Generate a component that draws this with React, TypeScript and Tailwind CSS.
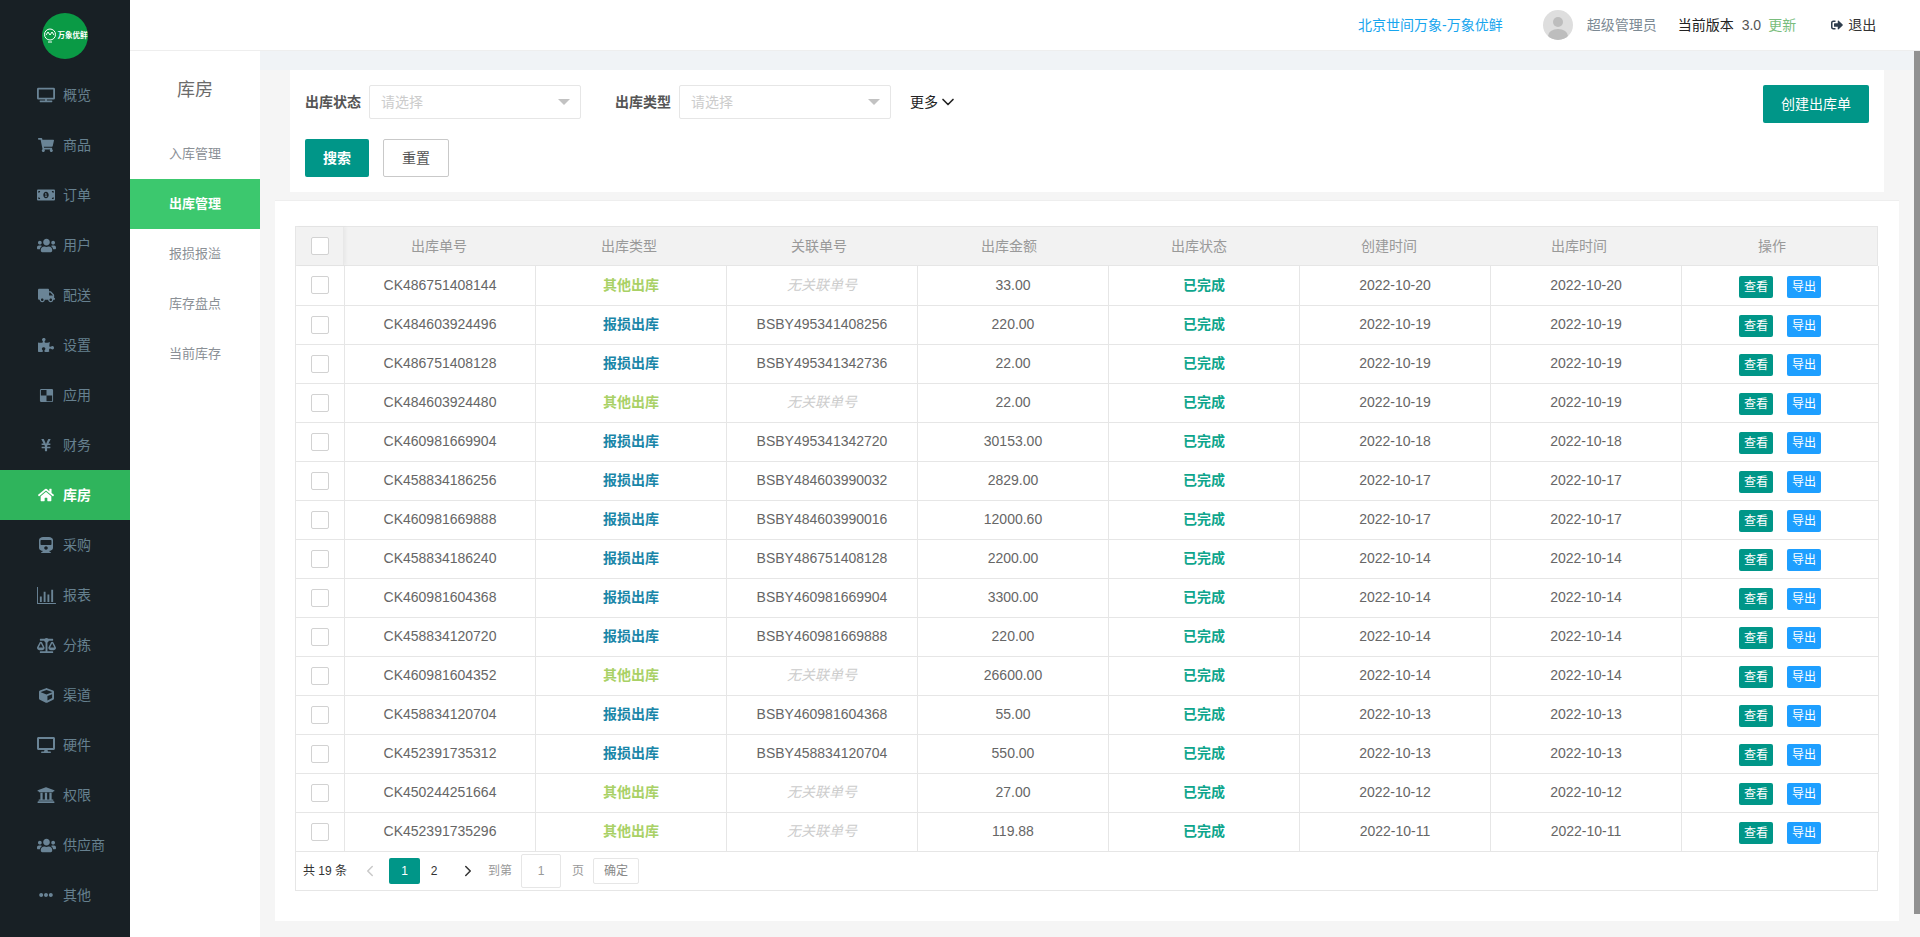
import {
  FaBalanceScale,
  FaCube,
  FaDelicious,
  FaDesktop,
  FaEllipsisH,
  FaHome,
  FaMoneyBillAlt,
  FaPuzzlePiece,
  FaShoppingCart,
  FaSignOutAlt,
  FaTrain,
  FaTruck,
  FaTv,
  FaUniversity,
  FaUsers,
  FaYenSign,
} from "react-icons/fa";
import { LuChevronDown, LuChevronLeft, LuChevronRight } from "react-icons/lu";

const BarsIcon = () => (
  <svg viewBox="0 0 20 18" className="w-[19px] h-[17px]" fill="currentColor">
    <path d="M0 0h1v17h19v1H0z" />
    <path d="M3 10h2v6H3zM7 5h2v11H7zM11 8h2v8h-2zM15 3h2v13h-2z" />
  </svg>
);

const menus = [
  { name: "概览", icon: <FaTv size={18} /> },
  { name: "商品", icon: <FaShoppingCart size={16} /> },
  { name: "订单", icon: <FaMoneyBillAlt size={18} /> },
  { name: "用户", icon: <FaUsers size={19} /> },
  { name: "配送", icon: <FaTruck size={17} /> },
  { name: "设置", icon: <FaPuzzlePiece size={16} /> },
  { name: "应用", icon: <FaDelicious size={15} /> },
  { name: "财务", icon: <FaYenSign size={14} /> },
  { name: "库房", icon: <FaHome size={16} />, active: true },
  { name: "采购", icon: <FaTrain size={16} /> },
  { name: "报表", icon: <BarsIcon /> },
  { name: "分拣", icon: <FaBalanceScale size={19} /> },
  { name: "渠道", icon: <FaCube size={15} /> },
  { name: "硬件", icon: <FaDesktop size={18} /> },
  { name: "权限", icon: <FaUniversity size={18} /> },
  { name: "供应商", icon: <FaUsers size={19} /> },
  { name: "其他", icon: <FaEllipsisH size={14} /> },
];

const subMenus = ["入库管理", "出库管理", "报损报溢", "库存盘点", "当前库存"];

const headers = ["出库单号", "出库类型", "关联单号", "出库金额", "出库状态", "创建时间", "出库时间"];

const rows = [
  ["CK486751408144", "其他出库", "", "33.00", "2022-10-20", "2022-10-20"],
  ["CK484603924496", "报损出库", "BSBY495341408256", "220.00", "2022-10-19", "2022-10-19"],
  ["CK486751408128", "报损出库", "BSBY495341342736", "22.00", "2022-10-19", "2022-10-19"],
  ["CK484603924480", "其他出库", "", "22.00", "2022-10-19", "2022-10-19"],
  ["CK460981669904", "报损出库", "BSBY495341342720", "30153.00", "2022-10-18", "2022-10-18"],
  ["CK458834186256", "报损出库", "BSBY484603990032", "2829.00", "2022-10-17", "2022-10-17"],
  ["CK460981669888", "报损出库", "BSBY484603990016", "12000.60", "2022-10-17", "2022-10-17"],
  ["CK458834186240", "报损出库", "BSBY486751408128", "2200.00", "2022-10-14", "2022-10-14"],
  ["CK460981604368", "报损出库", "BSBY460981669904", "3300.00", "2022-10-14", "2022-10-14"],
  ["CK458834120720", "报损出库", "BSBY460981669888", "220.00", "2022-10-14", "2022-10-14"],
  ["CK460981604352", "其他出库", "", "26600.00", "2022-10-14", "2022-10-14"],
  ["CK458834120704", "报损出库", "BSBY460981604368", "55.00", "2022-10-13", "2022-10-13"],
  ["CK452391735312", "报损出库", "BSBY458834120704", "550.00", "2022-10-13", "2022-10-13"],
  ["CK450244251664", "其他出库", "", "27.00", "2022-10-12", "2022-10-12"],
  ["CK452391735296", "其他出库", "", "119.88", "2022-10-11", "2022-10-11"],
];

const Checkbox = () => (
  <span className="block w-[18px] h-[18px] mx-auto bg-white border border-[#d2d2d2] rounded-[2px]" />
);

const Select = () => (
  <div className="flex items-center justify-between w-[212px] h-[34px] pl-[11px] pr-[10px] bg-white border border-[#e6e6e6] rounded-[2px] text-[14px] text-[#cccccc]">
    <span>请选择</span>
    <span className="w-0 h-0 border-x-[6px] border-x-transparent border-t-[6px] border-t-[#c2c2c2]" />
  </div>
);

const App = () => {
  return (
    <div className="flex w-[1920px] h-[937px] overflow-hidden bg-[#f5f5f5] font-['Liberation_Sans','Noto_Sans_CJK_SC',sans-serif]">
      {/* Main menu */}
      <aside className="w-[130px] shrink-0 bg-[#182025]">
        <div className="flex items-start justify-center h-[70px] pt-[13px]">
          <div className="flex items-center justify-center gap-[1px] w-[46px] h-[46px] rounded-full bg-[#0a9a45] text-white">
            <svg viewBox="0 0 14 16" className="w-[14px] h-[16px] shrink-0" fill="none" stroke="currentColor" strokeWidth="1">
              <circle cx="7" cy="6.5" r="5.5" />
              <path d="M3 7l2-3 2 3 2-3 2 3M5 14h4" />
            </svg>
            <span className="text-[7.5px] leading-none font-bold whitespace-nowrap">万象优鲜</span>
          </div>
        </div>
        {menus.map((m) => (
          <div
            key={m.name}
            className={
              m.active
                ? "flex items-center h-[50px] bg-[#2fb45c] text-white"
                : "flex items-center h-[50px] text-[#6a8496]"
            }
          >
            <span className="flex justify-center w-[20px] ml-[36px] mr-[7px]">{m.icon}</span>
            <span className={m.active ? "text-[14px] font-bold" : "text-[14px] text-[#66808f]"}>{m.name}</span>
          </div>
        ))}
      </aside>

      <div className="flex flex-col flex-1 min-w-0">
        {/* Top bar */}
        <header className="flex items-center h-[50px] shrink-0 bg-white text-[14px]">
          <span className="ml-[1228px] text-[#17a5ee] whitespace-nowrap">北京世间万象-万象优鲜</span>
          <span className="ml-[40px] w-[30px] h-[30px] rounded-full overflow-hidden bg-[#dedede]">
            <svg viewBox="0 0 30 30" className="w-[30px] h-[30px]" fill="#bdbdbd">
              <circle cx="15" cy="12" r="5" />
              <ellipse cx="15" cy="26" rx="10" ry="7" />
            </svg>
          </span>
          <span className="ml-[14px] text-[#7c8a94] whitespace-nowrap">超级管理员</span>
          <span className="ml-[21px] text-[#222222] whitespace-nowrap">当前版本</span>
          <span className="ml-[8px] text-[#555555]">3.0</span>
          <span className="ml-[7px] text-[#79bd7c] whitespace-nowrap">更新</span>
          <FaSignOutAlt size={12} className="ml-[35px] shrink-0 text-[#2f3e4e]" />
          <span className="ml-[5px] text-[#333333] whitespace-nowrap">退出</span>
        </header>

        <div className="flex flex-1 min-h-0 border-t border-[#eeeeee]">
          {/* Sub menu */}
          <nav className="w-[130px] shrink-0 bg-white">
            <div className="flex items-center justify-center h-[78px] text-[18px] text-[#6b6b6b]">库房</div>
            {subMenus.map((s) => (
              <div
                key={s}
                className={
                  s === "出库管理"
                    ? "flex items-center justify-center h-[50px] text-[13px] font-bold text-white bg-[#3cc86e]"
                    : "flex items-center justify-center h-[50px] text-[13px] text-[#8b9096]"
                }
              >
                {s}
              </div>
            ))}
          </nav>

          <main className="flex-1 min-w-0">
            <div className="h-[19px] bg-[#f0f3f6]" />

            {/* Filters */}
            <section className="flex justify-between w-[1594px] h-[122px] ml-[30px] p-[15px] bg-white">
              <div>
                <div className="flex items-center">
                  <span className="w-[64px] text-[14px] font-bold text-[#555555] whitespace-nowrap">出库状态</span>
                  <Select />
                  <span className="w-[98px] pl-[34px] text-[14px] font-bold text-[#555555] whitespace-nowrap">出库类型</span>
                  <Select />
                  <span className="ml-[19px] text-[14px] text-[#222222]">更多</span>
                  <LuChevronDown size={20} className="text-[#222222]" />
                </div>
                <div className="flex gap-[14px] mt-[20px]">
                  <button type="button" className="w-[64px] h-[38px] rounded-[2px] bg-[#009688] text-[14px] font-bold text-white">
                    搜索
                  </button>
                  <button type="button" className="w-[66px] h-[38px] rounded-[2px] bg-white border border-[#c9c9c9] text-[14px] text-[#555555]">
                    重置
                  </button>
                </div>
              </div>
              <button type="button" className="w-[106px] h-[38px] rounded-[2px] bg-[#009688] text-[14px] text-white">
                创建出库单
              </button>
            </section>

            {/* Table card */}
            <section className="w-[1624px] h-[721px] ml-[15px] mt-[8px] pt-[25px] pl-[20px] bg-white border-t border-[#eeeeee]">
              <div className="w-[1583px] text-[14px] text-[#666666]">
                <div className="flex items-center h-[40px] bg-[#f2f2f2] border border-[#e6e6e6] text-center text-[#999999]">
                  <div className="flex items-center w-[48px] h-full border-r border-[#e8e8e8] shadow-[2px_0_3px_rgba(0,0,0,0.04)]">
                    <Checkbox />
                  </div>
                  {headers.map((h) => (
                    <div key={h} className="w-[190px]">
                      {h}
                    </div>
                  ))}
                  <div className="w-[196px]">操作</div>
                </div>

                <table className="w-[1583px] table-fixed border-collapse">
                  <colgroup>
                    <col className="w-[49px]" />
                    <col className="w-[191px]" />
                    <col className="w-[191px]" />
                    <col className="w-[191px]" />
                    <col className="w-[191px]" />
                    <col className="w-[191px]" />
                    <col className="w-[191px]" />
                    <col className="w-[191px]" />
                    <col className="w-[197px]" />
                  </colgroup>
                  <tbody>
                    {rows.map((r) => (
                      <tr key={r[0]} className="h-[39px] text-center">
                        <td className="p-0 border border-t-0 border-[#e6e6e6]">
                          <Checkbox />
                        </td>
                        <td className="p-0 border border-t-0 border-[#e6e6e6]">{r[0]}</td>
                        <td
                          className={
                            r[1] === "其他出库"
                              ? "p-0 border border-t-0 border-[#e6e6e6] font-bold text-[#a9d166]"
                              : "p-0 border border-t-0 border-[#e6e6e6] font-bold text-[#1a86a8]"
                          }
                        >
                          {r[1]}
                        </td>
                        <td className="p-0 border border-t-0 border-[#e6e6e6]">
                          {r[2] || <span className="italic text-[#cccccc]">无关联单号</span>}
                        </td>
                        <td className="p-0 border border-t-0 border-[#e6e6e6]">{r[3]}</td>
                        <td className="p-0 border border-t-0 border-[#e6e6e6] font-bold text-[#0ea58c]">已完成</td>
                        <td className="p-0 border border-t-0 border-[#e6e6e6]">{r[4]}</td>
                        <td className="p-0 border border-t-0 border-[#e6e6e6]">{r[5]}</td>
                        <td className="p-0 border border-t-0 border-[#e6e6e6]">
                          <div className="flex justify-center gap-[14px] pt-[3px]">
                            <span className="flex items-center justify-center w-[34px] h-[22px] rounded-[2px] bg-[#009688] text-[12px] text-white">
                              查看
                            </span>
                            <span className="flex items-center justify-center w-[34px] h-[22px] rounded-[2px] bg-[#1e9fff] text-[12px] text-white">
                              导出
                            </span>
                          </div>
                        </td>
                      </tr>
                    ))}
                  </tbody>
                </table>

                {/* Pagination */}
                <div className="flex items-center h-[39px] pl-[7px] border-x border-b border-[#e6e6e6] text-[12px] text-[#333333]">
                  <span>共 19 条</span>
                  <LuChevronLeft size={18} className="ml-[14px] text-[#c9c9c9]" />
                  <span className="flex items-center justify-center w-[31px] h-[26px] ml-[10px] rounded-[2px] bg-[#009688] text-white">
                    1
                  </span>
                  <span className="flex items-center justify-center w-[28px] h-[26px]">2</span>
                  <LuChevronRight size={18} className="ml-[11px] text-[#333333]" />
                  <span className="ml-[11px] text-[#999999]">到第</span>
                  <span className="flex items-center justify-center w-[40px] h-[34px] ml-[9px] border border-[#e6e6e6] rounded-[2px] text-[#999999]">
                    1
                  </span>
                  <span className="ml-[11px] text-[#999999]">页</span>
                  <span className="flex items-center justify-center w-[46px] h-[26px] ml-[9px] border border-[#e6e6e6] rounded-[2px] text-[#888888]">
                    确定
                  </span>
                </div>
              </div>
            </section>
          </main>

          {/* Scrollbar */}
          <div className="w-[6px] shrink-0">
            <div className="w-[6px] h-[863px] bg-[#919191]" />
          </div>
        </div>
      </div>
    </div>
  );
};

export default App;
